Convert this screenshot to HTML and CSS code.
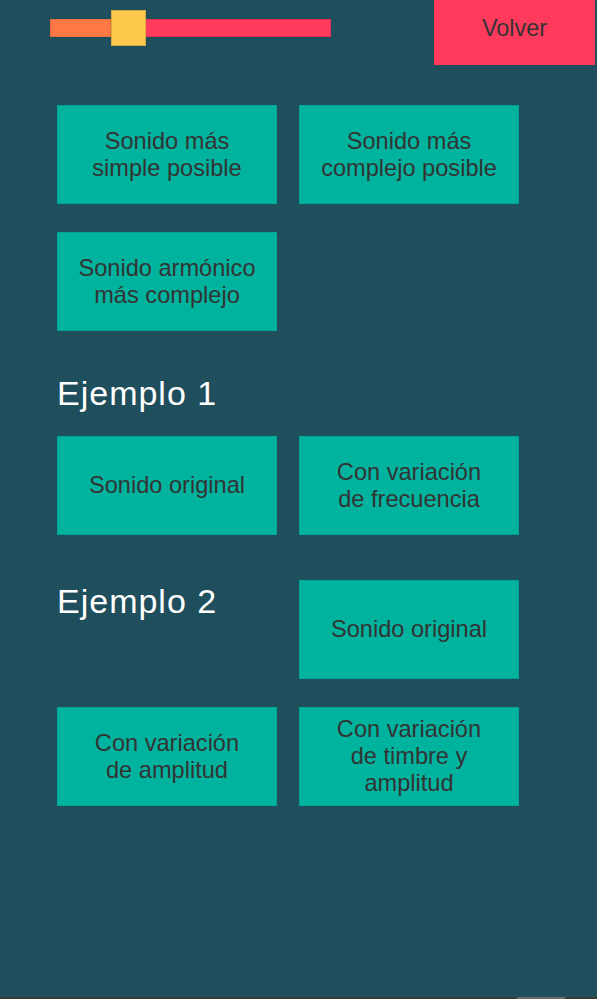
FILE: index.html
```html
<!DOCTYPE html>
<html lang="es">
<head>
<meta charset="utf-8">
<title>Sonidos</title>
<link rel="stylesheet" href="styles.css">
</head>
<body>
  <header class="topbar">
    <div class="slider">
      <div class="track">
        <div class="fill"></div>
      </div>
      <div class="thumb"></div>
    </div>
    <button class="back">Volver</button>
  </header>
  <main class="panel">
    <button class="btn">Sonido más<br>simple posible</button>
    <button class="btn">Sonido más<br>complejo posible</button>
    <button class="btn">Sonido armónico<br>más complejo</button>
    <h2 class="heading heading-first">Ejemplo 1</h2>
    <button class="btn">Sonido original</button>
    <button class="btn">Con variación<br>de frecuencia</button>
    <h2 class="heading heading-second">Ejemplo 2</h2>
    <button class="btn btn-offset">Sonido original</button>
    <button class="btn">Con variación<br>de amplitud</button>
    <button class="btn">Con variación<br>de timbre y<br>amplitud</button>
  </main>
  <footer class="bottombar">
    <span class="scrollthumb"></span>
  </footer>
</body>
</html>
```

FILE: styles.css
```css
html, body {
  margin: 0;
  padding: 0;
}

body {
  background: #1f4e5c;
  height: 100vh;
  display: flex;
  flex-direction: column;
  font-family: "Liberation Sans", Arial, sans-serif;
  overflow: hidden;
}

.topbar {
  height: 65px;
  display: flex;
  align-items: flex-start;
  flex-shrink: 0;
}

.slider {
  position: relative;
  margin-left: 50px;
  margin-top: 19px;
  width: 281px;
  height: 18px;
}

.track {
  width: 100%;
  height: 100%;
  background: #ff3a5c;
  box-shadow: inset 0 0 0 1px rgba(0, 0, 0, 0.12);
  display: flex;
}

.fill {
  width: 61px;
  height: 100%;
  background: #ff7944;
  box-shadow: inset 0 0 0 1px rgba(0, 0, 0, 0.08);
}

.thumb {
  position: absolute;
  left: 61px;
  top: -9px;
  width: 35px;
  height: 36px;
  background: #ffc94d;
  box-shadow: inset 0 0 0 1px rgba(0, 0, 0, 0.15);
}

.back {
  margin-left: auto;
  margin-right: 2px;
  width: 161px;
  height: 65px;
  border: none;
  padding: 0 0 8px 0;
  background: #ff3a5c;
  color: #333333;
  font-family: "Liberation Sans", Arial, sans-serif;
  font-size: 23.4px;
  line-height: 27px;
}

.panel {
  display: grid;
  grid-template-columns: 220px 220px;
  column-gap: 22px;
  row-gap: 28px;
  padding: 40px 0 0 57px;
  align-items: start;
}

.btn {
  height: 99px;
  border: none;
  margin: 0;
  padding: 0;
  background: #00b39f;
  color: #333333;
  font-family: "Liberation Sans", Arial, sans-serif;
  font-size: 23.6px;
  line-height: 27px;
  text-align: center;
  box-shadow: inset 0 0 0 1px rgba(0, 60, 60, 0.12);
}

.heading {
  margin: 0;
  color: #ffffff;
  font-weight: normal;
  font-size: 34px;
  letter-spacing: 1px;
  line-height: 32px;
  white-space: nowrap;
}

.heading-first {
  grid-column: 1 / -1;
  margin-top: 18px;
  margin-bottom: -1px;
}

.heading-second {
  align-self: start;
  margin-top: 22px;
}

.btn-offset {
  align-self: start;
  margin-top: 17px;
}

.bottombar {
  margin-top: auto;
  height: 2px;
  background: #3b3c33;
  display: flex;
  flex-shrink: 0;
}

.scrollthumb {
  margin-left: 517px;
  width: 48px;
  height: 100%;
  background: #6b6b62;
}
```
